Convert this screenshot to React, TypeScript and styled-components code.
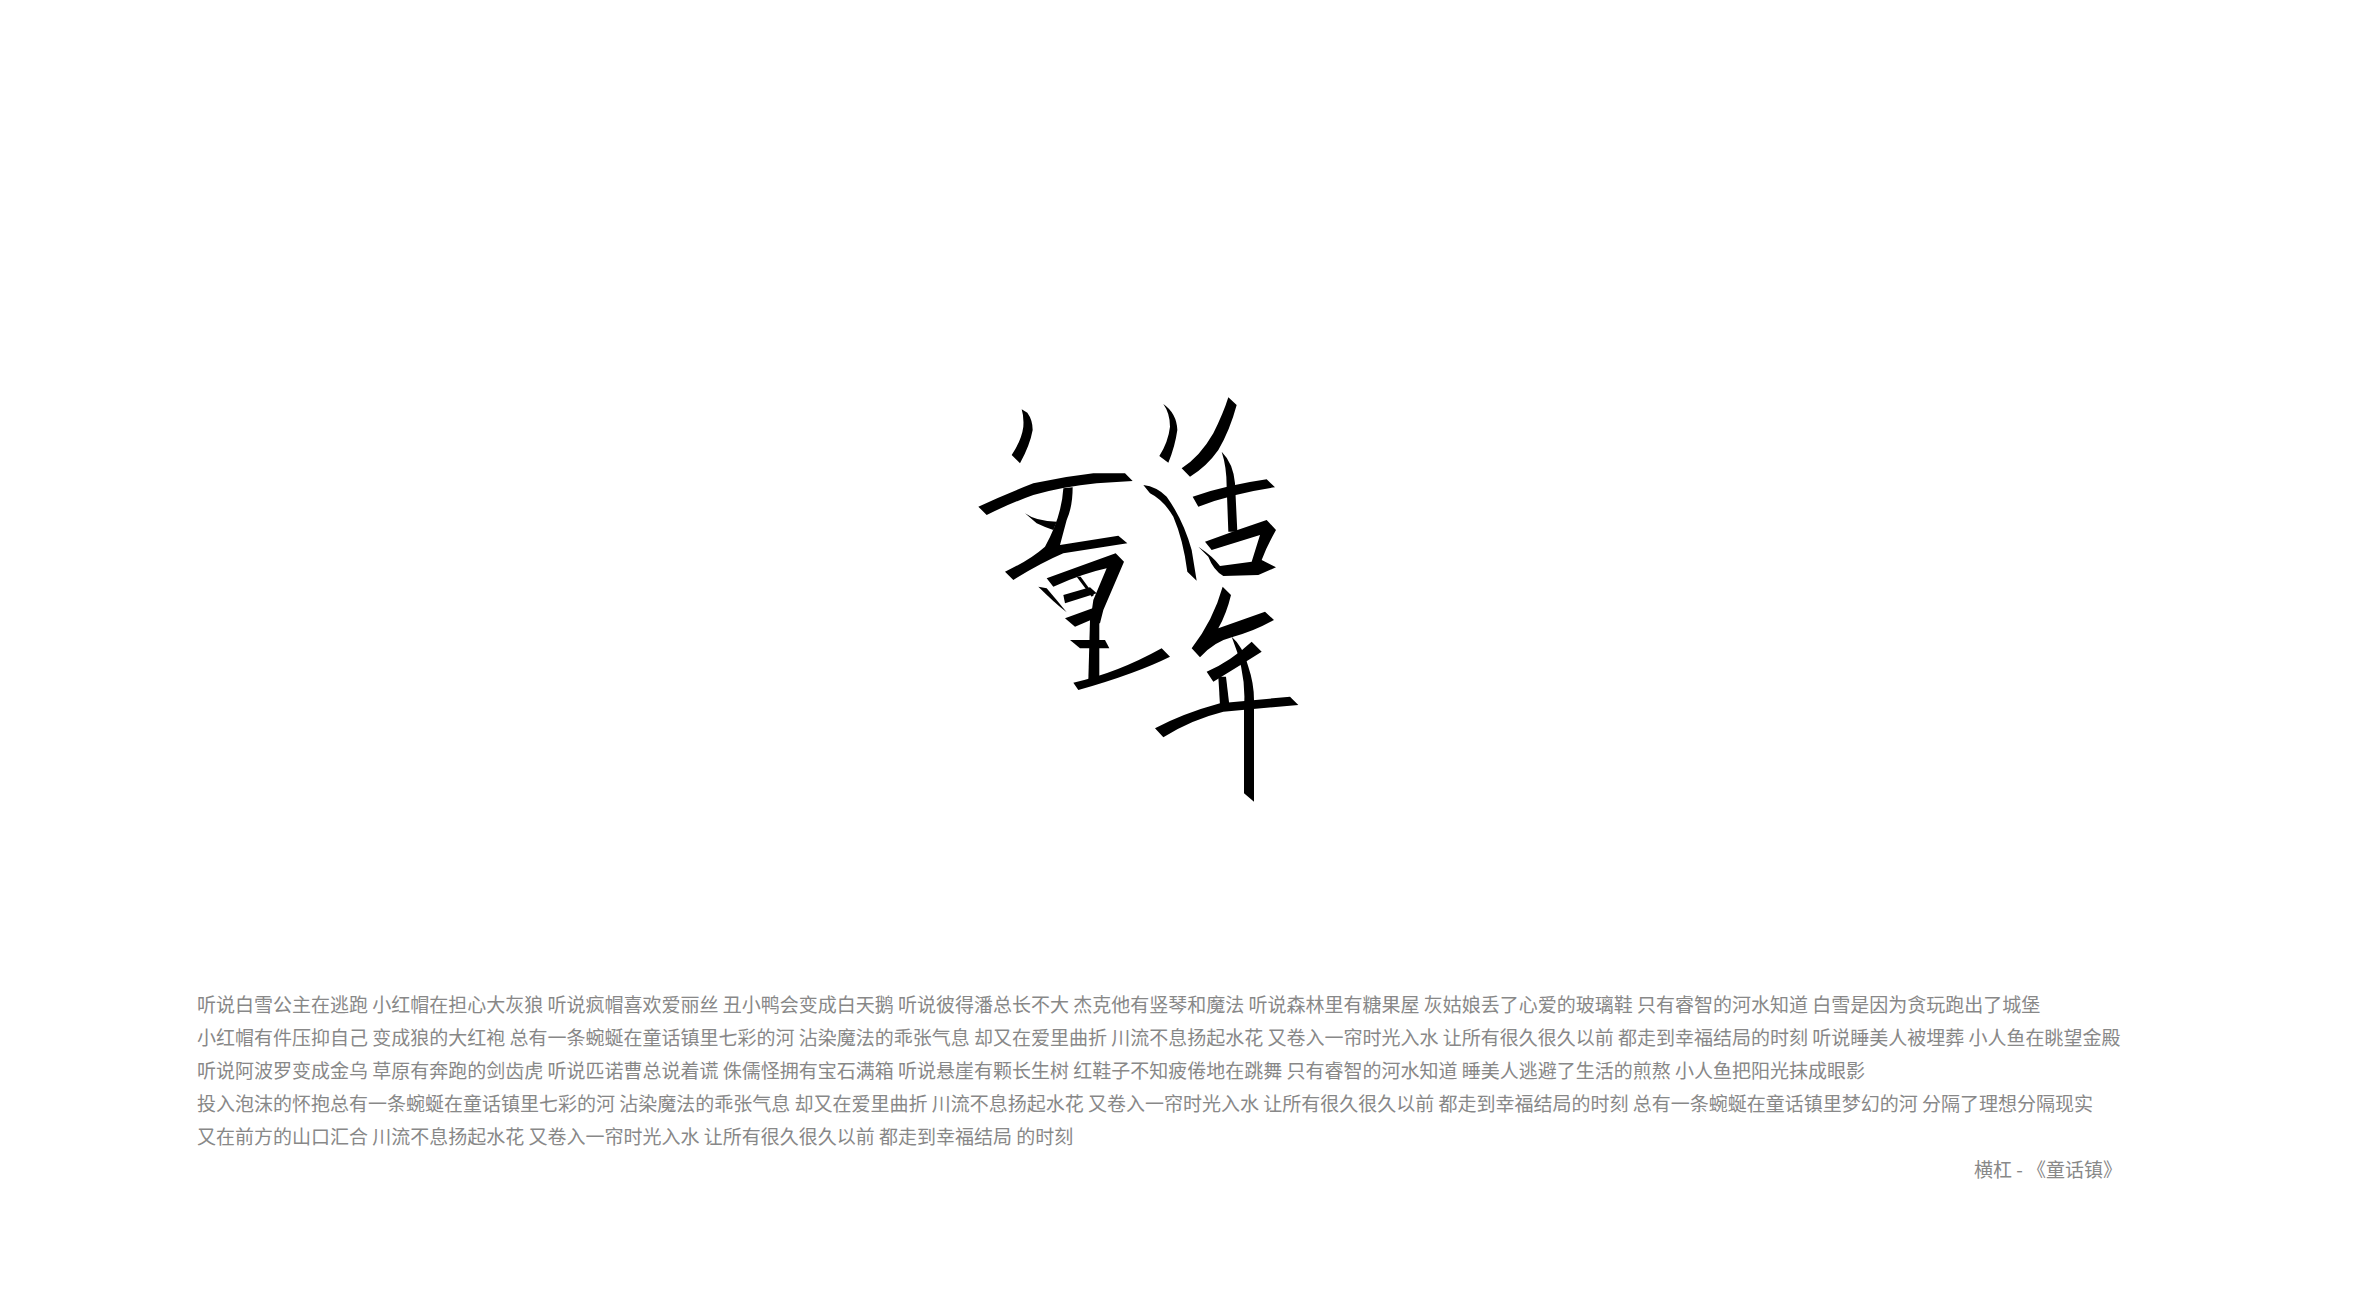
import styled, { createGlobalStyle } from 'styled-components';

const GlobalStyle = createGlobalStyle`
html, body {
  margin: 0;
  padding: 0;
  background: #fff;
}
`;

const Page = styled.div`
width: 2376px;
height: 1300px;
overflow: hidden;
padding-top: 380px;
box-sizing: border-box;
background: #fff;
`;

const Artwork = styled.svg`
display: block;
width: 380px;
height: 430px;
margin-left: 950px;
`;

const Lyrics = styled.div`
width: 1980px;
margin: 177px 0 0 197px;
font-family: "Noto Sans CJK SC", "Noto Sans", sans-serif;
font-size: 19px;
line-height: 33px;
color: #888;
`;

const Line = styled.div`
white-space: nowrap;
`;

const Credit = styled.div`
text-align: right;
padding-right: 55px;
`;

const lines = [
  '听说白雪公主在逃跑 小红帽在担心大灰狼 听说疯帽喜欢爱丽丝 丑小鸭会变成白天鹅 听说彼得潘总长不大 杰克他有竖琴和魔法 听说森林里有糖果屋 灰姑娘丢了心爱的玻璃鞋 只有睿智的河水知道 白雪是因为贪玩跑出了城堡',
  '小红帽有件压抑自己 变成狼的大红袍 总有一条蜿蜒在童话镇里七彩的河 沾染魔法的乖张气息 却又在爱里曲折 川流不息扬起水花 又卷入一帘时光入水 让所有很久很久以前 都走到幸福结局的时刻 听说睡美人被埋葬 小人鱼在眺望金殿',
  '听说阿波罗变成金乌 草原有奔跑的剑齿虎 听说匹诺曹总说着谎 侏儒怪拥有宝石满箱 听说悬崖有颗长生树 红鞋子不知疲倦地在跳舞 只有睿智的河水知道 睡美人逃避了生活的煎熬 小人鱼把阳光抹成眼影',
  '投入泡沫的怀抱总有一条蜿蜒在童话镇里七彩的河 沾染魔法的乖张气息 却又在爱里曲折 川流不息扬起水花 又卷入一帘时光入水 让所有很久很久以前 都走到幸福结局的时刻 总有一条蜿蜒在童话镇里梦幻的河 分隔了理想分隔现实',
  '又在前方的山口汇合 川流不息扬起水花 又卷入一帘时光入水 让所有很久很久以前 都走到幸福结局 的时刻',
];

// brush strokes of the title artwork, in 3x units of the artwork box
const strokes = [
  'M215,88 L232,98 Q248,120 248,150 Q240,195 210,250 L185,225 Q215,180 220,140 Q222,110 215,88 Z',
  'M85,380 Q160,345 250,310 Q340,290 430,280 L525,280 L548,303 L440,310 Q340,320 250,345 Q180,370 110,405 Z',
  'M340,325 L368,322 Q368,380 350,420 L330,495 L505,467 L532,490 L340,520 Q270,550 190,600 L165,575 Q240,540 285,500 Q335,410 340,325 Z',
  'M225,400 Q260,425 320,425 L310,450 Q280,440 260,430 Z',
  'M290,595 Q400,555 497,520 L522,545 Q490,620 460,690 L450,730 L420,730 L430,660 L470,565 Q400,580 310,620 Z',
  'M340,645 L420,622 L440,640 L345,670 Z',
  'M380,590 L392,590 L432,645 L425,650 Z',
  'M265,620 L290,625 Q320,660 350,697 Q310,665 265,620 Z',
  'M345,715 L440,680 L445,710 L375,740 Z',
  'M420,720 L448,715 L448,890 L415,900 Z',
  'M360,780 L465,780 L478,805 L390,805 Z',
  'M370,908 Q500,880 635,805 L660,830 Q560,880 385,930 Z',
  'M640,72 Q680,100 682,150 Q675,200 655,248 L628,228 Q655,185 660,140 Q660,100 640,72 Z',
  'M835,52 L860,75 Q840,150 805,210 Q770,260 720,290 L695,265 Q750,230 790,160 Q820,100 835,52 Z',
  'M815,215 Q850,250 855,310 L862,455 L835,455 L830,320 Q830,260 815,215 Z',
  'M728,350 Q830,315 950,298 L975,322 Q850,340 745,380 Z',
  'M580,315 Q620,320 650,350 Q700,420 725,510 L740,602 L712,575 Q700,480 670,410 Q640,360 600,340 Z',
  'M765,485 Q860,450 950,420 L978,450 Q950,500 935,540 L978,562 L925,585 L820,588 Q790,570 775,530 L745,500 Q790,530 810,558 L905,545 L930,465 L785,510 Z',
  'M818,620 L843,645 Q830,700 805,745 L945,695 L972,720 Q910,755 850,770 Q790,785 750,832 L725,805 Q790,720 818,620 Z',
  'M770,875 Q840,845 905,785 L935,815 L880,850 L790,905 Z',
  'M845,770 Q880,800 895,860 Q912,910 912,960 L912,1265 L882,1240 L882,980 Q890,880 845,770 Z',
  'M805,890 L828,890 L838,975 L810,975 Z',
  'M615,1045 Q700,1000 810,970 L1020,950 L1045,975 L820,995 Q720,1020 640,1072 Z',
];

export default function App() {
  return (
    <Page>
      <GlobalStyle />
      <Artwork viewBox="0 0 1140 1290" role="img" aria-label="童话年">
        {strokes.map((d, i) => (
          <path key={i} d={d} fill="#000" />
        ))}
      </Artwork>
      <Lyrics>
        {lines.map((line, i) => (
          <Line key={i}>{line}</Line>
        ))}
        <Credit>横杠 - 《童话镇》</Credit>
      </Lyrics>
    </Page>
  );
}
